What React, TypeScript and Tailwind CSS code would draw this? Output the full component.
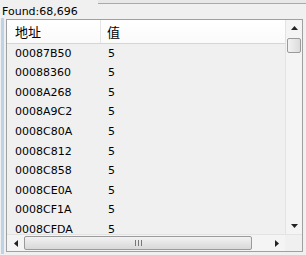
import React from 'react'

// rows shown in the results list
const rows = [
  '00087B50',
  '00088360',
  '0008A268',
  '0008A9C2',
  '0008C80A',
  '0008C812',
  '0008C858',
  '0008CE0A',
  '0008CF1A',
  '0008CFDA',
  '0008D08A',
]

const Arrow = ({ dir }: { dir: 'up' | 'down' | 'left' | 'right' }) => {
  const pts = {
    up: '0,4 7,4 3.5,0',
    down: '0,0 7,0 3.5,4',
    left: '4,0 4,7 0,3.5',
    right: '0,0 0,7 4,3.5',
  }[dir]
  const vertical = dir === 'up' || dir === 'down'
  return (
    <svg width={vertical ? 7 : 4} height={vertical ? 4 : 7} viewBox={vertical ? '0 0 7 4' : '0 0 4 7'}>
      <polygon points={pts} fill="#222" />
    </svg>
  )
}

export default function App() {
  return (
    <div
      className="w-[306px] h-[255px] bg-[#f0f0f0] overflow-hidden flex flex-col text-black"
      style={{ fontFamily: '"DejaVu Sans", sans-serif' }}
    >
      {/* edge of the control above */}
      <div className="h-[4px] shrink-0 ml-[98px] border-b border-[#a9a9a9] bg-[#e8e8e8]" />
      <div className="h-[15px] shrink-0 pl-[2px] text-[11px] leading-[15px]">Found:68,696</div>

      <div className="flex shrink-0">
        <div className="w-[3px] ml-[1px] h-[236px] bg-[#bcd3ea] -mt-[1px]" />
        <div className="ml-[2px] w-[297px] h-[233px] border border-[#a0a0a0] flex flex-col bg-[#f0f0f0]">
          <div className="flex flex-1 min-h-0">
            <div className="flex-1 flex flex-col min-w-0">
              {/* header */}
              <div
                className="h-[24px] shrink-0 flex items-center border-b border-[#d5d5d5] bg-gradient-to-b from-white to-[#fafafa] text-[13px]"
                style={{ fontFamily: '"Noto Sans CJK SC", sans-serif' }}
              >
                <div className="w-[94px] h-full pl-[8px] flex items-center border-r border-[#e5e5e5]">地址</div>
                <div className="pl-[6px]">值</div>
              </div>
              {/* rows */}
              <div className="flex-1 overflow-hidden text-[11px]">
                {rows.map((r) => (
                  <div key={r} className="h-[19.6px] flex items-center">
                    <div className="w-[95px] pl-[8px]">{r}</div>
                    <div className="pl-[6px]">5</div>
                  </div>
                ))}
              </div>
            </div>
            {/* vertical scrollbar */}
            <div className="w-[17px] flex flex-col border-l border-[#e3e3e3] bg-[#f4f4f4]">
              <div className="h-[17px] flex items-center justify-center pb-[1px]">
                <Arrow dir="up" />
              </div>
              <div className="h-[15px] mx-[1px] mt-[1px] border border-[#9a9a9a] rounded-[2px] bg-gradient-to-r from-[#f2f2f2] to-[#dcdcdc]" />
              <div className="flex-1" />
              <div className="h-[17px] flex items-center justify-center">
                <Arrow dir="down" />
              </div>
            </div>
          </div>
          {/* horizontal scrollbar */}
          <div className="h-[17px] shrink-0 flex border-t border-[#e3e3e3]">
            <div className="flex-1 flex bg-[#f4f4f4]">
              <div className="w-[17px] flex items-center justify-center">
                <Arrow dir="left" />
              </div>
              <div className="w-[228px] my-[1px] border border-[#9a9a9a] rounded-[2px] bg-gradient-to-b from-[#f2f2f2] to-[#d8d8d8] flex items-center justify-center gap-[2px]">
                <div className="w-px h-[6px] bg-[#777]" />
                <div className="w-px h-[6px] bg-[#777]" />
                <div className="w-px h-[6px] bg-[#777]" />
              </div>
              <div className="flex-1" />
              <div className="w-[17px] flex items-center justify-center">
                <Arrow dir="right" />
              </div>
            </div>
            <div className="w-[17px] bg-[#f0f0f0]" />
          </div>
        </div>
      </div>
    </div>
  )
}
